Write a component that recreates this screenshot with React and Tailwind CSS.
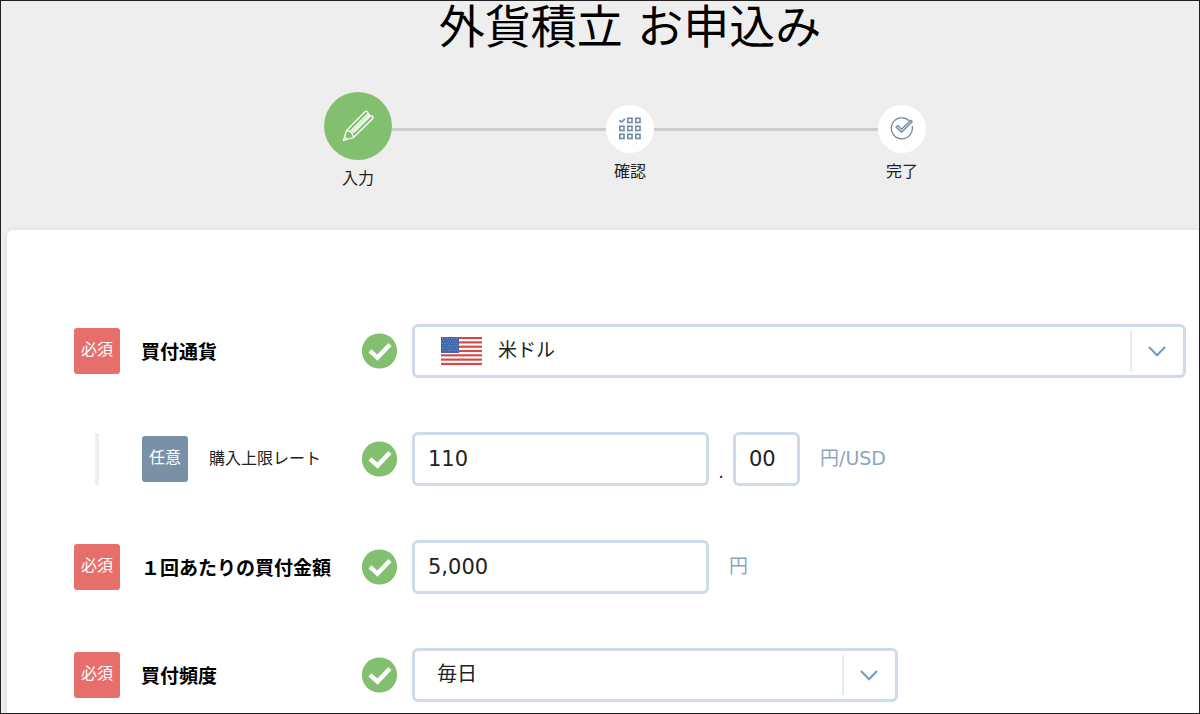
import clsx from 'clsx';

const steps = [
  { id: 'input', label: '入力', icon: PencilIcon, active: true },
  { id: 'confirm', label: '確認', icon: GridIcon },
  { id: 'done', label: '完了', icon: DoneIcon },
];

function PencilIcon() {
  return (
    <svg className="size-8" viewBox="0 0 32 32" fill="none" stroke="#fff" strokeWidth="1.3" strokeLinejoin="round" strokeLinecap="round">
      <path d="M1.500 30.500 4.500 20.500 23 1.800Q24.300 .7 25.500 1.900 26.700 3.100 25.500 4.300L9.500 20.300" />
      <path d="M1.500 30.500 11.500 27.500 30.500 8.800Q31.600 7.500 30.400 6.300 29.200 5.100 28 6.300L12 22.300" />
      <path d="M25.500 4.300 27 4.300 28 6.300M26.800 5.500 10.500 21.500" />
      <path d="M4.500 20.500 8.500 21.500 10.200 23.500 11.500 27.500M2.800 27 5 29.300" />
    </svg>
  );
}

function GridIcon() {
  const cells = [[9, 1], [17, 1], [1, 9], [9, 9], [17, 9], [1, 17], [9, 17], [17, 17]];
  return (
    <svg className="size-6" viewBox="0 0 24 24" fill="none" stroke="#6f8aa6" strokeWidth="1.6">
      {cells.map(([x, y]) => (
        <rect key={`${x}-${y}`} x={x + 0.8} y={y + 0.3} width="4.200" height="4.200" />
      ))}
      <path d="M1.200 3.300 3.400 5 7 1.800" />
    </svg>
  );
}

function DoneIcon() {
  return (
    <svg className="size-6" viewBox="0 0 24 24" fill="none" stroke="#7189a3" strokeWidth="1.3" strokeLinejoin="round">
      <path d="M19.300 3.900A10.500 10.500 0 1 0 22.100 9" />
      <path d="M6 10 7.800 8.400 11.500 12.100 20.700 3.300 22.300 4.800 11.500 15.300Z" fill="#dbe2ea" />
    </svg>
  );
}

function CheckMark() {
  return (
    <svg className="size-9 shrink-0" viewBox="0 0 36 36" role="img" aria-label="OK">
      <circle cx="17.500" cy="18" r="17.600" fill="#82bf6e" />
      <path d="M8 17.800 15.500 24.600 28 11.500" fill="none" stroke="#fff" strokeWidth="4.400" />
    </svg>
  );
}

function UsFlag() {
  const stripes = [0, 2, 4, 6, 8, 10, 12];
  const stars = [];
  for (let row = 0; row < 6; row++) {
    for (let col = 0; col < 7; col++) {
      stars.push([1.600 + col * 2.300 + (row % 2) * 1.100, 1.800 + row * 2.300]);
    }
  }
  return (
    <svg className="h-7 w-[41px]" viewBox="0 0 41 28" aria-hidden="true">
      <rect width="41" height="28" fill="#fff" />
      {stripes.map((n) => (
        <rect key={n} y={(n * 28) / 13} width="41" height={28 / 13} fill="#d14a48" />
      ))}
      <rect width="18" height="16" fill="#3f66a8" />
      {stars.map(([cx, cy]) => (
        <circle key={`${cx}-${cy}`} cx={cx} cy={cy} r="0.450" fill="#b9c9e2" />
      ))}
    </svg>
  );
}

function Badge({ optional }) {
  return (
    <span
      className={clsx(
        'flex size-[46px] shrink-0 items-center justify-center rounded-[3px] pb-0.5 text-base text-white',
        optional ? 'bg-[#7a90a6]' : 'bg-[#e76f6b]'
      )}
    >
      {optional ? '任意' : '必須'}
    </span>
  );
}

function Row({ id, label, optional, children }) {
  return (
    <div className="flex h-[54px] items-center">
      <div className="flex w-[288px] shrink-0 items-center self-stretch">
        {optional && <span className="mr-[43px] ml-[21px] h-[52px] w-1 bg-[#eee]" />}
        <Badge optional={optional} />
        <label
          htmlFor={id}
          className={clsx(
            'ml-[21px] whitespace-nowrap',
            optional ? 'text-base text-[#222]' : 'pt-0.5 text-[19px] font-bold text-black'
          )}
        >
          {label}
        </label>
      </div>
      <CheckMark />
      <div className="ml-[14px] flex min-w-0 flex-1 items-center self-stretch">{children}</div>
    </div>
  );
}

function TextBox({ className, ...props }) {
  return (
    <input
      type="text"
      inputMode="numeric"
      className={clsx(
        'h-[54px] rounded-md border-3 border-[#cfdbea] bg-white px-[13px] text-[21px] text-[#222] outline-none',
        className
      )}
      {...props}
    />
  );
}

function SelectBox({ id, options, flag, className }) {
  return (
    <div className={clsx('relative h-[54px]', className)}>
      <select
        id={id}
        className={clsx(
          'h-full w-full appearance-none rounded-md border-3 border-[#cfdbea] bg-white pr-14 pb-0.5 text-[#222] outline-none',
          flag ? 'pl-[83px] text-[19px]' : 'pl-[22px] text-[20px]'
        )}
      >
        {options.map((option) => (
          <option key={option}>{option}</option>
        ))}
      </select>
      {flag && (
        <span className="pointer-events-none absolute inset-y-0 left-[29px] flex items-center">
          <UsFlag />
        </span>
      )}
      <span className="pointer-events-none absolute inset-y-[7px] right-[3px] flex w-[53px] items-center justify-center border-l-2 border-[#e0eaf5] pr-0.5">
        <svg className="h-3 w-[18px]" viewBox="0 0 18 12" fill="none" stroke="#6d9bcb" strokeWidth="2">
          <path d="M1 2 9 10.300 17 2" />
        </svg>
      </span>
    </div>
  );
}

export default function App() {
  return (
    <div className="flex min-h-screen flex-col border border-[#222] bg-[#eee] font-['DejaVu_Sans','Noto_Sans_CJK_JP',sans-serif]">
      <header className="flex flex-col items-center pl-[60px]">
        <h1 className="text-[46px] leading-[52px] text-black">外貨積立 お申込み</h1>
        <ol className="mt-[39px] flex w-[612px] items-start">
          {steps.map(({ id, label, icon: Icon, active }, i) => (
            <li key={id} className={clsx('flex items-start', i > 0 && 'flex-1')}>
              {i > 0 && <span className="-mx-3 mt-9 h-[3px] flex-1 bg-[#ccc]" />}
              <div className={clsx('relative flex w-[68px] flex-col items-center gap-[7px]', !active && 'mt-[13px]')}>
                <span
                  className={clsx(
                    'flex items-center justify-center rounded-full',
                    active ? 'size-[68px] bg-[#82bf6e]' : 'size-12 bg-white'
                  )}
                >
                  <Icon />
                </span>
                <span className="text-base leading-6 text-[#222]">{label}</span>
              </div>
            </li>
          ))}
        </ol>
      </header>

      <main className="mt-[39px] ml-[6px] flex-1 rounded-tl-md bg-white pt-[94px] pr-[13px] pb-[10px] pl-[67px] shadow-[0_0_6px_rgba(0,0,0,0.08)]">
        <form className="flex flex-col gap-[54px]">
          <Row id="currency" label="買付通貨">
            <SelectBox id="currency" options={['米ドル']} flag className="flex-1" />
          </Row>
          <Row id="rate" label="購入上限レート" optional>
            <TextBox id="rate" defaultValue="110" className="w-[297px]" />
            <span className="w-6 self-end text-center text-lg text-[#222]">.</span>
            <TextBox aria-label="購入上限レート 小数部" defaultValue="00" className="w-[67px]" />
            <span className="ml-5 pb-0.5 text-[19px] text-[#8ba5bd]">円/USD</span>
          </Row>
          <Row id="amount" label="１回あたりの買付金額">
            <TextBox id="amount" defaultValue="5,000" className="w-[297px]" />
            <span className="ml-5 pb-0.5 text-[19px] text-[#8ba5bd]">円</span>
          </Row>
          <Row id="frequency" label="買付頻度">
            <SelectBox id="frequency" options={['毎日']} className="w-[486px]" />
          </Row>
        </form>
      </main>
    </div>
  );
}
